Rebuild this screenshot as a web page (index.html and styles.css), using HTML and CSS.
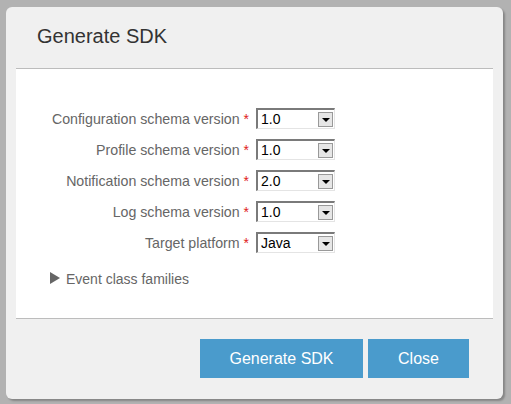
FILE: index.html
```html
<!DOCTYPE html>
<html>
<head>
<meta charset="utf-8">
<link rel="stylesheet" href="styles.css">
</head>
<body>
<div class="dialog">
  <div class="header"><h1 class="title">Generate SDK</h1></div>
  <div class="content">
    <div class="form">
      <label class="label">Configuration schema version <span class="req">*</span></label>
      <div class="select"><span class="value">1.0</span><span class="arrow"></span></div>
      <label class="label">Profile schema version <span class="req">*</span></label>
      <div class="select"><span class="value">1.0</span><span class="arrow"></span></div>
      <label class="label">Notification schema version <span class="req">*</span></label>
      <div class="select"><span class="value">2.0</span><span class="arrow"></span></div>
      <label class="label">Log schema version <span class="req">*</span></label>
      <div class="select"><span class="value">1.0</span><span class="arrow"></span></div>
      <label class="label">Target platform <span class="req">*</span></label>
      <div class="select"><span class="value">Java</span><span class="arrow"></span></div>
    </div>
    <div class="disclosure"><span class="tri"></span><span>Event class families</span></div>
  </div>
  <div class="footer">
    <button class="btn btn-wide">Generate SDK</button>
    <button class="btn btn-close">Close</button>
  </div>
</div>
</body>
</html>
```
FILE: styles.css
```css
html, body {
  margin: 0;
  padding: 0;
}
body {
  background: #b2b2b2;
  padding: 7px 0 0 6px;
  font-family: "Liberation Sans", Arial, sans-serif;
  height: 404px;
  box-sizing: border-box;
}
.dialog {
  width: 497px;
  height: 392px;
  background: #f0f0f0;
  border-radius: 6px;
  box-shadow: 2px 2px 2px rgba(0, 0, 0, 0.25);
  display: flex;
  flex-direction: column;
}
.header {
  height: 61px;
  padding-left: 31px;
  display: flex;
  align-items: center;
  box-sizing: border-box;
}
.title {
  margin: 0;
  font-weight: normal;
  font-size: 20px;
  color: #333;
  padding-bottom: 2px;
}
.content {
  margin: 0 10px;
  background: #fff;
  border-top: 1px solid #bcbcbc;
  border-bottom: 1px solid #bcbcbc;
  height: 251px;
  box-sizing: border-box;
  padding: 39px 0 0 34px;
}
.form {
  display: grid;
  grid-template-columns: 199px 79px;
  column-gap: 7px;
  row-gap: 10px;
  align-items: center;
}
.label {
  text-align: right;
  font-size: 14.2px;
  color: #666;
  white-space: nowrap;
}
.req {
  color: #e02020;
  font-size: 14px;
}
.select {
  height: 21px;
  box-sizing: border-box;
  border-top: 2px solid #7a7a7a;
  border-left: 2px solid #7a7a7a;
  border-right: 1px solid #e4e4e4;
  border-bottom: 1px solid #e4e4e4;
  background: #fff;
  display: flex;
  align-items: center;
  justify-content: space-between;
  padding: 0 1px 0 3px;
}
.value {
  font-size: 14px;
  color: #000;
}
.arrow {
  width: 15px;
  height: 15px;
  box-sizing: border-box;
  background: #e6e6e6;
  border: 1px solid #999;
  position: relative;
}
.arrow::after {
  content: "";
  position: absolute;
  left: 3px;
  top: 5px;
  border-left: 4px solid transparent;
  border-right: 4px solid transparent;
  border-top: 4px solid #000;
}
.disclosure {
  margin-top: 18px;
  display: flex;
  align-items: center;
  gap: 6px;
  font-size: 14px;
  color: #666;
}
.tri {
  width: 0;
  height: 0;
  border-top: 6px solid transparent;
  border-bottom: 6px solid transparent;
  border-left: 10px solid #666;
  margin-bottom: 3px;
}
.footer {
  display: flex;
  justify-content: flex-end;
  gap: 5px;
  padding: 20px 34px 0 0;
}
.btn {
  height: 39px;
  border: none;
  background: #4a9bcc;
  color: #fff;
  font-family: "Liberation Sans", Arial, sans-serif;
  font-size: 16px;
  padding: 0;
}
.btn-wide {
  width: 163px;
}
.btn-close {
  width: 101px;
}
```
